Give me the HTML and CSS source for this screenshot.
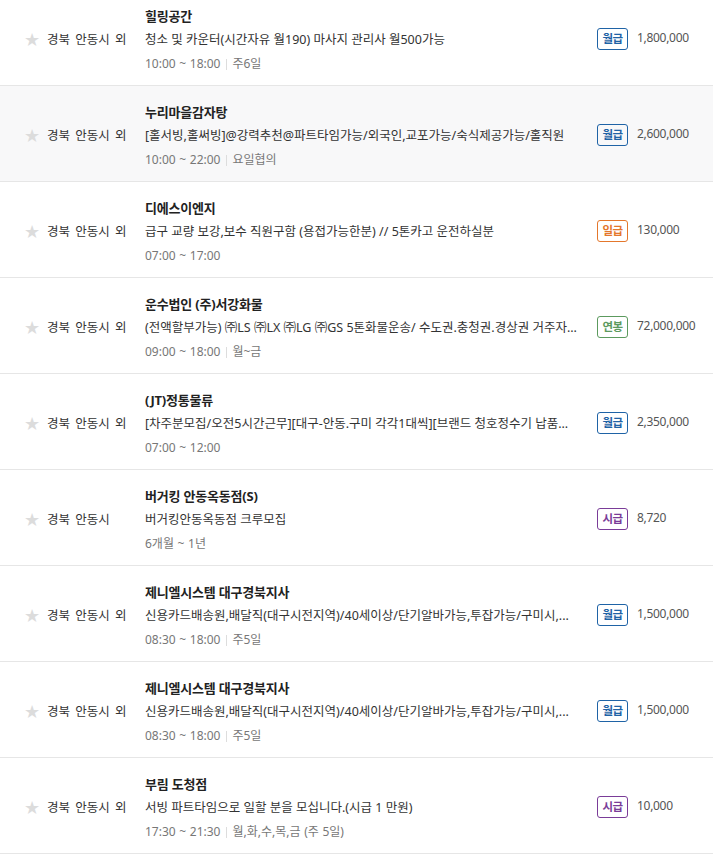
FILE: index.html
```html
<!DOCTYPE html>
<html lang="ko">
<head>
<meta charset="utf-8">
<link rel="stylesheet" href="styles.css">
</head>
<body>
<ul class="list">
  <li class="row">
    <div class="loc"><span class="star">★</span><span class="area">경북 안동시 외</span></div>
    <div class="info">
      <div class="title">힐링공간</div>
      <div class="desc">청소 및 카운터(시간자유 월190) 마사지 관리사 월500가능</div>
      <div class="time">10:00 ~ 18:00<span class="sep"></span>주6일</div>
    </div>
    <div class="pay"><span class="badge month">월급</span><span class="amount">1,800,000</span></div>
  </li>
  <li class="row shade">
    <div class="loc"><span class="star">★</span><span class="area">경북 안동시 외</span></div>
    <div class="info">
      <div class="title">누리마을감자탕</div>
      <div class="desc">[홀서빙,홀써빙]@강력추천@파트타임가능/외국인,교포가능/숙식제공가능/홀직원</div>
      <div class="time">10:00 ~ 22:00<span class="sep"></span>요일협의</div>
    </div>
    <div class="pay"><span class="badge month">월급</span><span class="amount">2,600,000</span></div>
  </li>
  <li class="row">
    <div class="loc"><span class="star">★</span><span class="area">경북 안동시 외</span></div>
    <div class="info">
      <div class="title">디에스이엔지</div>
      <div class="desc">급구 교량 보강,보수 직원구함 (용접가능한분) // 5톤카고 운전하실분</div>
      <div class="time">07:00 ~ 17:00</div>
    </div>
    <div class="pay"><span class="badge day">일급</span><span class="amount">130,000</span></div>
  </li>
  <li class="row">
    <div class="loc"><span class="star">★</span><span class="area">경북 안동시 외</span></div>
    <div class="info">
      <div class="title">운수법인 (주)서강화물</div>
      <div class="desc">(전액할부가능) ㈜LS ㈜LX ㈜LG ㈜GS 5톤화물운송/ 수도권.충청권.경상권 거주자...</div>
      <div class="time">09:00 ~ 18:00<span class="sep"></span>월~금</div>
    </div>
    <div class="pay"><span class="badge year">연봉</span><span class="amount">72,000,000</span></div>
  </li>
  <li class="row">
    <div class="loc"><span class="star">★</span><span class="area">경북 안동시 외</span></div>
    <div class="info">
      <div class="title">(JT)정통물류</div>
      <div class="desc">[차주분모집/오전5시간근무][대구-안동.구미 각각1대씩][브랜드 청호정수기 납품...</div>
      <div class="time">07:00 ~ 12:00</div>
    </div>
    <div class="pay"><span class="badge month">월급</span><span class="amount">2,350,000</span></div>
  </li>
  <li class="row">
    <div class="loc"><span class="star">★</span><span class="area">경북 안동시</span></div>
    <div class="info">
      <div class="title">버거킹 안동옥동점(S)</div>
      <div class="desc">버거킹안동옥동점 크루모집</div>
      <div class="time">6개월 ~ 1년</div>
    </div>
    <div class="pay"><span class="badge hour">시급</span><span class="amount">8,720</span></div>
  </li>
  <li class="row">
    <div class="loc"><span class="star">★</span><span class="area">경북 안동시 외</span></div>
    <div class="info">
      <div class="title">제니엘시스템 대구경북지사</div>
      <div class="desc">신용카드배송원,배달직(대구시전지역)/40세이상/단기알바가능,투잡가능/구미시,...</div>
      <div class="time">08:30 ~ 18:00<span class="sep"></span>주5일</div>
    </div>
    <div class="pay"><span class="badge month">월급</span><span class="amount">1,500,000</span></div>
  </li>
  <li class="row">
    <div class="loc"><span class="star">★</span><span class="area">경북 안동시 외</span></div>
    <div class="info">
      <div class="title">제니엘시스템 대구경북지사</div>
      <div class="desc">신용카드배송원,배달직(대구시전지역)/40세이상/단기알바가능,투잡가능/구미시,...</div>
      <div class="time">08:30 ~ 18:00<span class="sep"></span>주5일</div>
    </div>
    <div class="pay"><span class="badge month">월급</span><span class="amount">1,500,000</span></div>
  </li>
  <li class="row">
    <div class="loc"><span class="star">★</span><span class="area">경북 안동시 외</span></div>
    <div class="info">
      <div class="title">부림 도청점</div>
      <div class="desc">서빙 파트타임으로 일할 분을 모십니다.(시급 1 만원)</div>
      <div class="time">17:30 ~ 21:30<span class="sep"></span>월,화,수,목,금 (주 5일)</div>
    </div>
    <div class="pay"><span class="badge hour">시급</span><span class="amount">10,000</span></div>
  </li>
</ul>
</body>
</html>
```

FILE: styles.css
```css
html, body {
  margin: 0;
  padding: 0;
  background: #fff;
}
body {
  font-family: "Noto Sans", "Noto Sans CJK KR", sans-serif;
  color: #333;
}
.list {
  list-style: none;
  margin: -10px 0 0 0;
  padding: 0;
}
.row {
  display: flex;
  align-items: flex-start;
  height: 95px;
  border-bottom: 1px solid #e6e6e6;
  background: #fff;
}
.row.shade {
  background: #f8f8f9;
}
.loc {
  display: flex;
  align-items: center;
  width: 145px;
  padding-left: 24px;
  box-sizing: border-box;
  padding-top: 40px;
  flex: none;
}
.star {
  color: #dcdcdc;
  font-size: 18px;
  line-height: 20px;
  width: 23px;
  font-family: "DejaVu Sans", sans-serif;
}
.area {
  font-size: 12.5px;
  line-height: 20px;
  color: #333;
  word-spacing: 2px;
}
.info {
  width: 448px;
  flex: none;
  padding-top: 14px;
  padding-right: 4px;
}
.title, .desc, .time {
  line-height: 24px;
  height: 24px;
  white-space: nowrap;
  overflow: hidden;
}
.title {
  font-size: 13px;
  font-weight: 700;
  color: #222;
  letter-spacing: -0.2px;
}
.desc {
  font-size: 12.5px;
  color: #333;
  letter-spacing: 0;
}
.time {
  font-size: 12px;
  color: #777;
  display: flex;
  align-items: center;
  word-spacing: 0.5px;
}
.sep {
  display: inline-block;
  width: 1px;
  height: 11px;
  background: #ddd;
  margin: 0 5px 0 6px;
}
.pay {
  display: flex;
  align-items: center;
  padding-top: 38px;
}
.badge {
  box-sizing: border-box;
  width: 31px;
  height: 22px;
  border: 1px solid currentColor;
  border-radius: 3px;
  font-size: 11.5px;
  font-weight: 700;
  line-height: 20px;
  text-align: center;
  letter-spacing: -0.5px;
}
.badge.month { color: #1f63a6; }
.badge.day { color: #e4772c; }
.badge.year { color: #5c9a5e; }
.badge.hour { color: #7a3c98; }
.amount {
  margin-left: 9px;
  font-size: 12px;
  color: #555;
  line-height: 20px;
  margin-top: -2px;
  letter-spacing: -0.3px;
}
```
